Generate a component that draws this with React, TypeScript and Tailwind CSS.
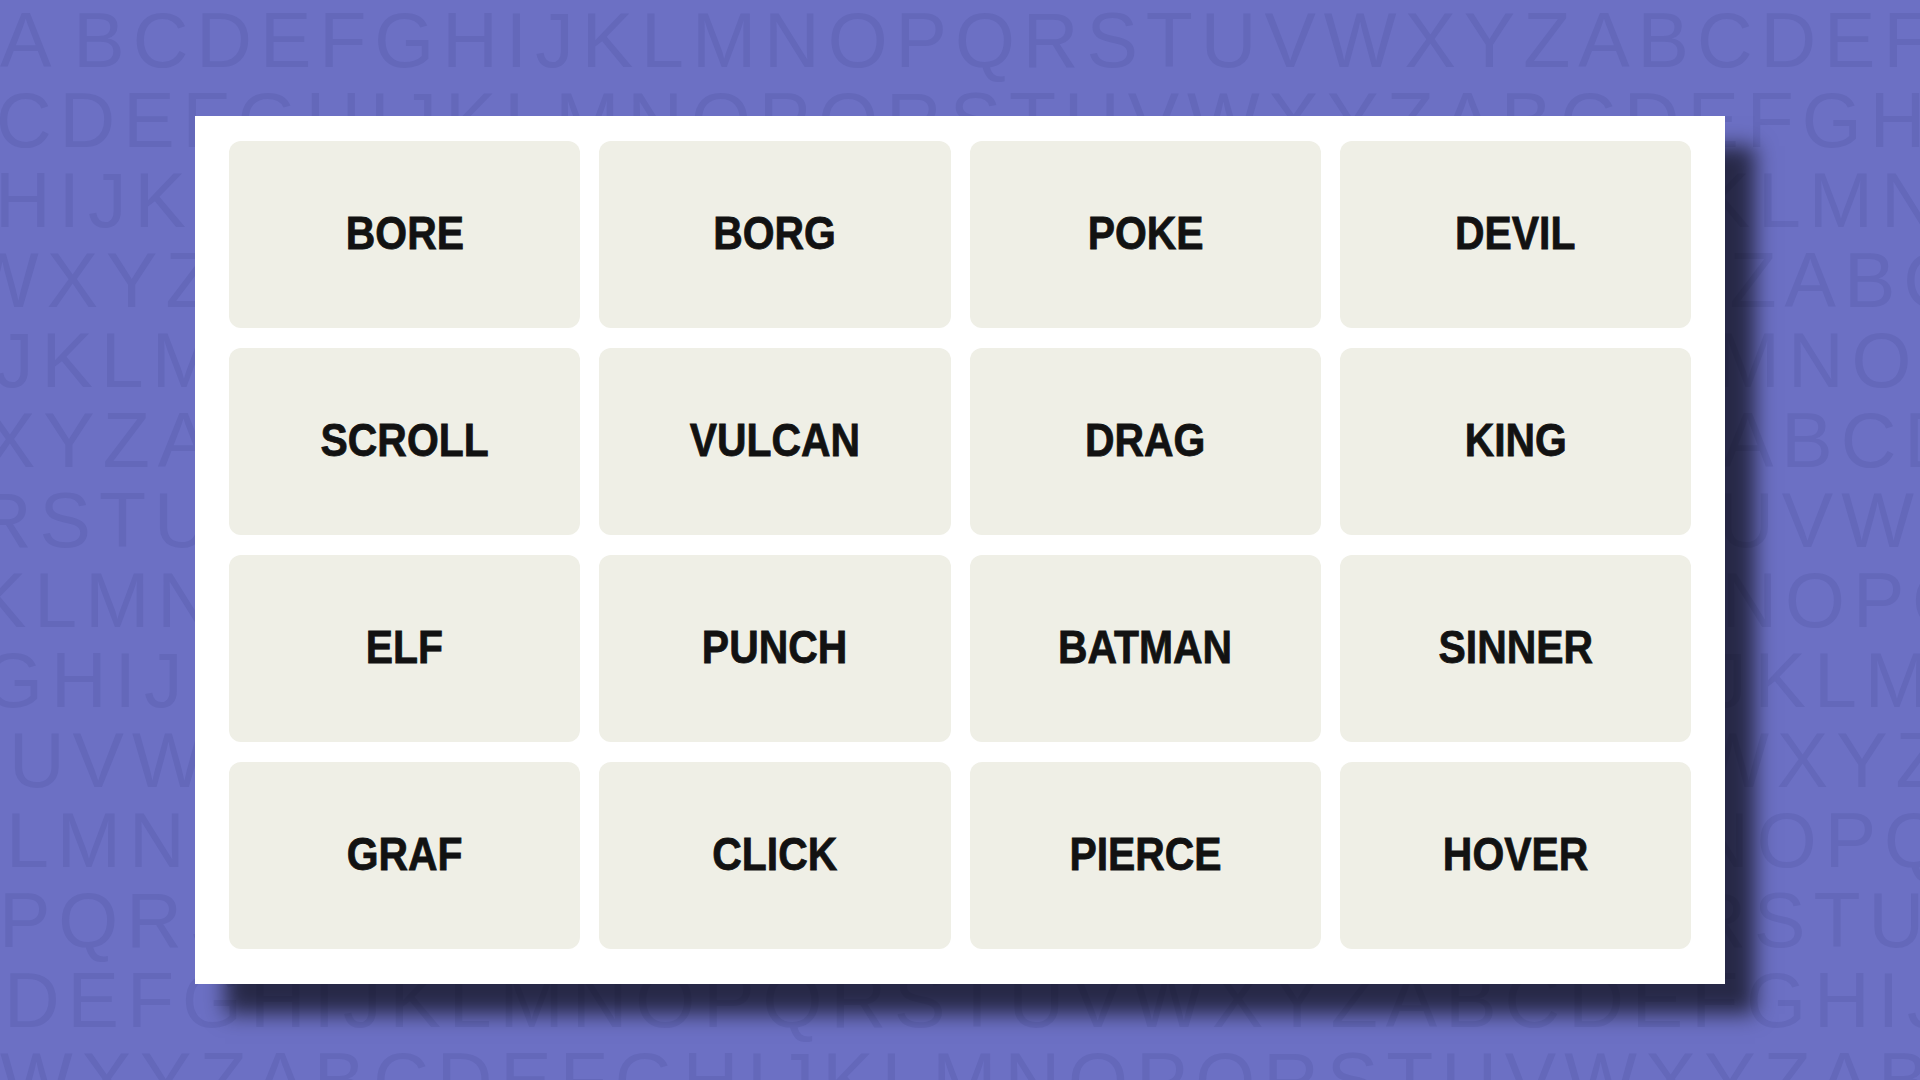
const ALPHA = "ABCDEFGHIJKLMNOPQRSTUVWXYZ";

// each background row: first letter and how far it starts left of the edge
const rows: { start: string; offset: number }[] = [
  { start: "A", offset: 0 },
  { start: "C", offset: -4 },
  { start: "H", offset: -5 },
  { start: "W", offset: -34 },
  { start: "J", offset: -5 },
  { start: "X", offset: -16 },
  { start: "R", offset: -24 },
  { start: "K", offset: -25 },
  { start: "G", offset: -17 },
  { start: "U", offset: 9 },
  { start: "L", offset: 6 },
  { start: "P", offset: -1 },
  { start: "D", offset: 4 },
  { start: "W", offset: 0 },
];

const words = [
  "BORE", "BORG", "POKE", "DEVIL",
  "SCROLL", "VULCAN", "DRAG", "KING",
  "ELF", "PUNCH", "BATMAN", "SINNER",
  "GRAF", "CLICK", "PIERCE", "HOVER",
];

function rowText(start: string) {
  const i = ALPHA.indexOf(start);
  return (ALPHA.slice(i) + ALPHA + ALPHA).slice(0, 40);
}

function LetterBackdrop() {
  return (
    <div className="absolute inset-0 select-none overflow-hidden font-['Liberation_Sans',Arial,sans-serif] text-[77px] leading-[80px] tracking-[8px] text-[#6468ba]">
      {rows.map((r, i) => {
        const text = rowText(r.start);
        return (
          <div key={i} className="whitespace-nowrap" style={{ marginLeft: r.offset }}>
            {i === 0 ? (
              <>
                <span className="mr-[14px]">{text[0]}</span>
                {text.slice(1)}
              </>
            ) : (
              text
            )}
          </div>
        );
      })}
    </div>
  );
}

function Tile({ word }: { word: string }) {
  return (
    <div className="flex h-[187px] items-center justify-center rounded-[12px] bg-[#efefe6] pb-[5px]">
      <span className="inline-block scale-x-[0.87] font-['Liberation_Sans',Arial,sans-serif] text-[47px] font-bold leading-none text-[#121212] [-webkit-text-stroke:0.8px_#121212]">
        {word}
      </span>
    </div>
  );
}

export default function App() {
  return (
    <div className="relative h-[1080px] w-full overflow-hidden bg-[#6c70c4]">
      <LetterBackdrop />
      <div className="relative flex justify-center pt-[116px]">
        <div className="grid w-[1530px] grid-cols-4 gap-x-[19px] gap-y-[20px] bg-white px-[34px] pt-[25px] pb-[35px] shadow-[30px_30px_20px_rgba(0,0,0,0.64)]">
          {words.map((w) => (
            <Tile key={w} word={w} />
          ))}
        </div>
      </div>
    </div>
  );
}
